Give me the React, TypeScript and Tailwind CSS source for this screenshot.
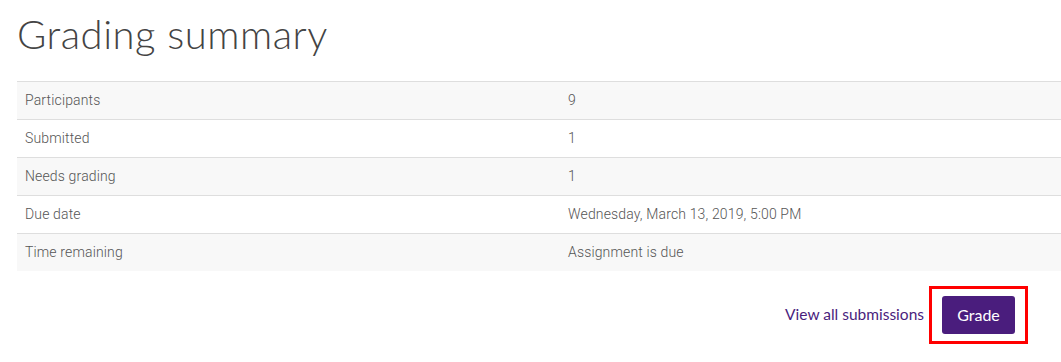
import React from "react";

const rows: [string, string][] = [
  ["Participants", "9"],
  ["Submitted", "1"],
  ["Needs grading", "1"],
  ["Due date", "Wednesday, March 13, 2019, 5:00 PM"],
  ["Time remaining", "Assignment is due"],
];

export default function App() {
  return (
    <div className="w-[1061px] h-[362px] bg-white overflow-hidden">
      <div className="pl-[17px] pt-[10px]">
        <h2
          className="text-[40px] leading-[48px] text-[#444] font-light tracking-[0.5px]"
          style={{ fontFamily: "Lato, 'Open Sans', sans-serif" }}
        >
          Grading summary
        </h2>
        <div className="mt-[23px] w-[1044px]" style={{ fontFamily: "Roboto, sans-serif" }}>
          {rows.map(([k, v], i) => (
            <div
              key={k}
              className={`flex h-[38px] items-center border-t border-[#dedede] text-[14px] font-light tracking-[0.15px] text-[#555] ${
                i % 2 === 0 ? "bg-[#f8f8f8]" : "bg-white"
              }`}
            >
              <div className="w-[551px] pl-[8px]">{k}</div>
              <div>{v}</div>
            </div>
          ))}
        </div>
        <div className="flex justify-end items-center w-[1011px] mt-[15px]">
          <a
            className="text-[15.5px] text-[#4a1d7d] mr-[5px]"
            style={{ fontFamily: "Lato, 'Open Sans', sans-serif" }}
          >
            View all submissions
          </a>
          <div className="border-[3px] border-[#ff0000] px-[10px] py-[7px]">
            <button
              className="block bg-[#4a1d7d] text-white text-[16px] rounded-[3px] w-[73px] h-[38px]"
              style={{ fontFamily: "Lato, 'Open Sans', sans-serif" }}
            >
              Grade
            </button>
          </div>
        </div>
      </div>
    </div>
  );
}
